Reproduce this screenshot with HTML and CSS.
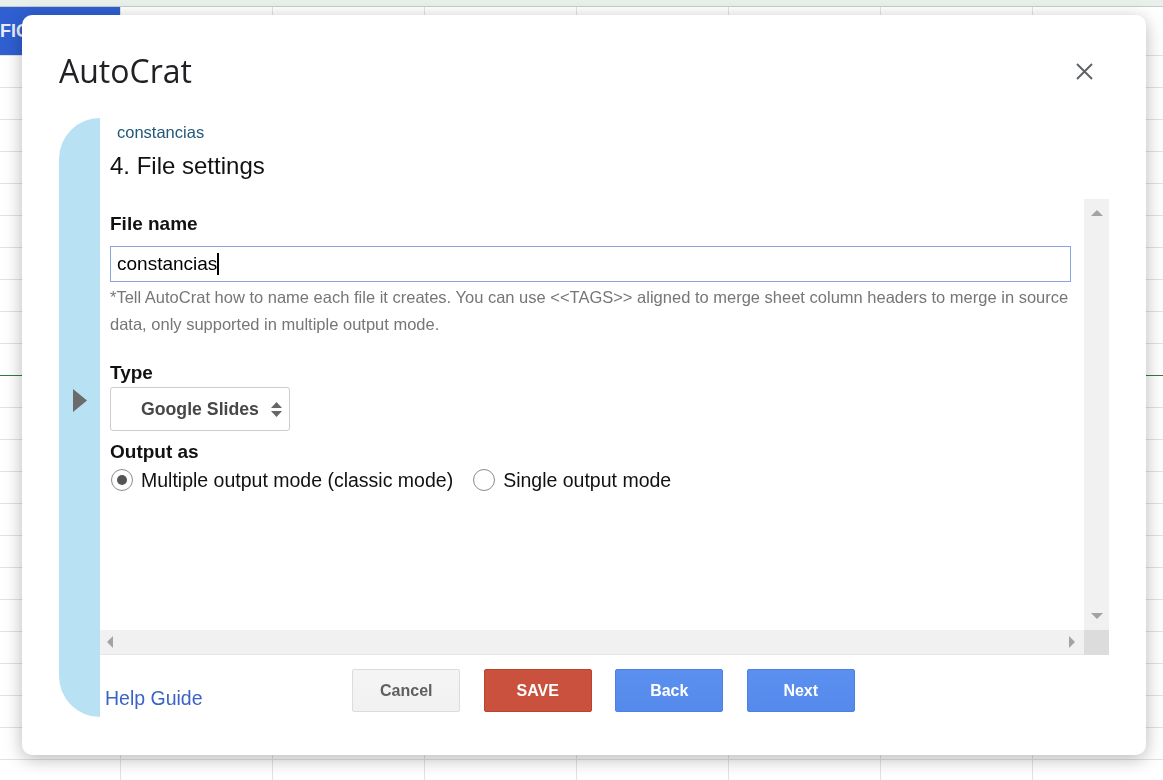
FILE: index.html
```html
<!DOCTYPE html>
<html lang="en">
<head>
  <meta charset="UTF-8" />
  <meta name="viewport" content="width=device-width, initial-scale=1.0"/>
  <title>AutoCrat</title>
  <link rel="stylesheet" href="styles.css">
</head>
<body>
  <div class="sheet">
    <div class="col-head"></div>
    <div class="row-first"><div class="cell-blue">FICHA</div></div>
    <div class="rows"></div>
  </div>

  <div class="dialog">
    <header class="dlg-head">
      <h1>AutoCrat</h1>
      <button class="close-btn" aria-label="Close">
        <svg width="17" height="17" viewBox="0 0 17 17"><path d="M1 1L16 16M16 1L1 16" stroke="#5f6368" stroke-width="2" fill="none"/></svg>
      </button>
    </header>
    <div class="dlg-body">
      <div class="rail">
        <svg width="14" height="23" viewBox="0 0 14 23"><polygon points="0,0 14,11.5 0,23" fill="#6b6b6b"/></svg>
      </div>
      <div class="frame">
        <div class="frame-top">
          <a class="job-name">constancias</a>
          <h2>4. File settings</h2>
        </div>
        <div class="scroller">
          <div class="scroll-content">
            <label class="field-label name-label">File name</label>
            <div class="text-input">constancias<span class="caret"></span></div>
            <p class="hint">*Tell AutoCrat how to name each file it creates. You can use &lt;&lt;TAGS&gt;&gt; aligned to merge sheet column headers to merge in source data, only supported in multiple output mode.</p>
            <label class="field-label type-label">Type</label>
            <div class="select-box">
              Google Slides
              <svg width="11" height="15" viewBox="0 0 11 15"><polygon points="0,6 5.5,0 11,6" fill="#666"/><polygon points="0,9 11,9 5.5,15" fill="#666"/></svg>
            </div>
            <label class="field-label out-label">Output as</label>
            <div class="radio-row">
              <label class="radio"><span class="dot checked"></span>Multiple output mode (classic mode)</label>
              <label class="radio"><span class="dot"></span>Single output mode</label>
            </div>
          </div>
          <div class="vbar"><span class="arr-up"></span><span class="arr-down"></span></div>
          <div class="hbar"><span class="arr-left"></span><span class="arr-right"></span></div>
          <div class="corner"></div>
        </div>
        <div class="footer">
          <a class="help-link">Help Guide</a>
          <div class="buttons">
            <button class="btn-cancel">Cancel</button>
            <button class="btn-save">SAVE</button>
            <button class="btn-blue">Back</button>
            <button class="btn-blue">Next</button>
          </div>
        </div>
      </div>
    </div>
  </div>
</body>
</html>
```

FILE: styles.css
```css
body {margin: 0; font-family: "Liberation Sans", Arial, sans-serif; background: #fff; overflow: hidden;}
/* Sheet behind the dialog */
.sheet {height: 780px; display: flex; flex-direction: column;}
.col-head {height: 6px; flex-shrink: 0; background: #e9efea; border-bottom: 1px solid #c6ccc7;}
.row-first {height: 48px; flex-shrink: 0; border-bottom: 1px solid #e2e2e2; background: linear-gradient(to right, transparent 151px, #e2e2e2 151px) 121px 0 / 152px 100%;}
.cell-blue {width: 120px; height: 100%; background: #2f5fd1; color: #e8eefb; font-weight: bold; font-size: 18px; display: flex; align-items: center; overflow: hidden;}
.rows {flex: 1; background: linear-gradient(#2f7d3b, #2f7d3b) 0 319px / 100% 1px no-repeat, linear-gradient(to bottom, transparent 31px, #e2e2e2 31px) 0 0 / 100% 32px, linear-gradient(to right, transparent 151px, #e2e2e2 151px) 121px 0 / 152px 100%;}
/* Dialog */
.dialog {position: fixed; left: 22px; top: 15px; width: 1124px; height: 740px; box-sizing: border-box; padding: 37px 37px 38px; background: #fff; border-radius: 10px; box-shadow: 0 4px 18px rgba(0,0,0,0.28); display: flex; flex-direction: column;}
.dlg-head {display: flex; align-items: center; justify-content: space-between; height: 38px; margin-bottom: 28px;}
.dlg-head h1 {margin: 0; font: 400 32px/38px "Open Sans", sans-serif; color: #202124;}
.close-btn {width: 24px; height: 24px; margin-right: 13px; padding: 0; border: none; background: none; display: flex; align-items: center; justify-content: center; cursor: pointer;}
.dlg-body {flex: 1; display: flex; min-height: 0;}
.rail {width: 41px; flex-shrink: 0; box-sizing: border-box; padding-bottom: 34px; background: #b8e1f4; border-radius: 41px 0 0 41px; display: flex; align-items: center; justify-content: center;}
.frame {flex: 1; min-width: 0; display: flex; flex-direction: column;}
.frame-top {height: 81px; flex-shrink: 0; box-sizing: border-box; padding: 2px 0 0 10px;}
.job-name {display: block; margin-left: 7px; font-size: 16.5px; line-height: 24px; color: #22587a; text-decoration: none;}
.frame-top h2 {margin: 8px 0 0; font-size: 24px; line-height: 28px; font-weight: normal; color: #111;}
/* Scroll area */
.scroller {height: 456px; flex-shrink: 0; display: grid; grid-template-columns: 1fr 25px; grid-template-rows: 1fr 25px;}
.scroll-content {padding: 13px 13px 0 10px; overflow: hidden;}
.field-label {display: block; font-weight: bold; font-size: 19px; line-height: 24px; color: #111;}
.name-label {margin-bottom: 10px;}
.text-input {height: 36px; box-sizing: border-box; border: 1px solid #88a4dc; padding: 0 6px; font-size: 19px; color: #000; display: flex; align-items: center;}
.caret {width: 2px; height: 22px; background: #000;}
.hint {margin: 2px 0 0; font-size: 16.5px; line-height: 27px; color: #767676;}
.type-label {margin-top: 23px; margin-bottom: 2px;}
.select-box {width: 180px; height: 44px; box-sizing: border-box; border: 1px solid #ccc; border-radius: 3px; padding: 0 7px 0 30px; display: flex; align-items: center; justify-content: space-between; font-weight: bold; font-size: 17.7px; color: #474747;}
.out-label {margin-top: 9px;}
.radio-row {height: 32px; display: flex; align-items: center; gap: 20px; margin-left: 1px;}
.radio {display: flex; align-items: center; gap: 8px; font-size: 19.5px; color: #111;}
.dot {width: 22px; height: 22px; box-sizing: border-box; border: 1px solid #8c8c8c; border-radius: 50%; display: flex; align-items: center; justify-content: center;}
.dot.checked::after {content: ""; width: 10px; height: 10px; border-radius: 50%; background: #555;}
.vbar {background: #f1f1f1; padding: 11px 0; display: flex; flex-direction: column; align-items: center; justify-content: space-between;}
.hbar {background: #f1f1f1; padding: 0 9px 0 7px; display: flex; align-items: center; justify-content: space-between; border-bottom: 1px solid #e6e6e6;}
.corner {background: #dcdcdc;}
.arr-up {width: 0; height: 0; border-left: 6px solid transparent; border-right: 6px solid transparent; border-bottom: 6px solid #a3a3a3;}
.arr-down {width: 0; height: 0; border-left: 6px solid transparent; border-right: 6px solid transparent; border-top: 6px solid #a3a3a3;}
.arr-left {width: 0; height: 0; border-top: 6px solid transparent; border-bottom: 6px solid transparent; border-right: 6px solid #a3a3a3;}
.arr-right {width: 0; height: 0; border-top: 6px solid transparent; border-bottom: 6px solid transparent; border-left: 6px solid #a3a3a3;}
/* Footer */
.footer {flex: 1; box-sizing: border-box; padding-bottom: 5px; display: grid; grid-template-columns: 1fr auto 1fr; align-items: end;}
.help-link {justify-self: start; margin: 0 0 2px 5px; font-size: 19.5px; line-height: 24px; color: #3a63c6; text-decoration: none; cursor: pointer;}
.buttons {display: flex; gap: 23.5px; margin-left: -2px;}
.buttons button {width: 108px; height: 43px; border-radius: 2px; font: bold 16px "Liberation Sans", Arial, sans-serif; cursor: pointer;}
.btn-cancel {background: linear-gradient(#f5f5f5, #f1f1f1); border: 1px solid #dcdcdc; color: #5f5f5f;}
.btn-save {background: #c9513d; border: 1px solid #b9452f; color: #fff;}
.btn-blue {background: linear-gradient(#5b90f0, #558aec); border: 1px solid #4b80e6; color: #fff;}
```
